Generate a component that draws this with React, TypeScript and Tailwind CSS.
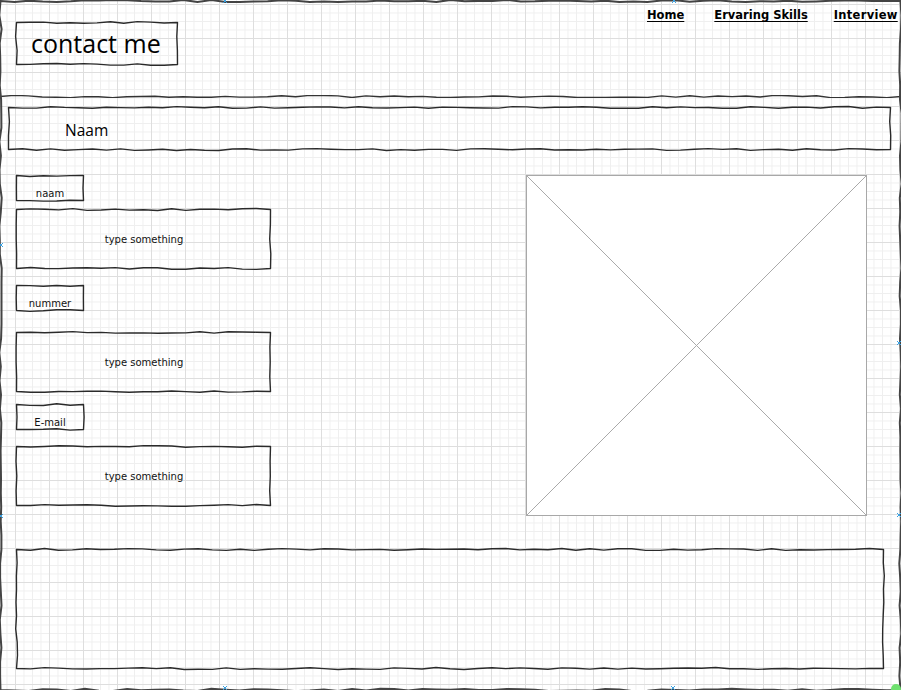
import type { ReactNode } from "react";

// small deterministic noise so the sketch lines look hand drawn but stay stable
const rnd = (i: number, seed: number) => {
  const x = Math.sin(i * 12.9898 + seed * 78.233) * 43758.5453;
  return x - Math.floor(x);
};

const roughPath = (w: number, h: number, seed: number, amp = 2) => {
  const pts: number[][] = [];
  const edge = (x0: number, y0: number, x1: number, y1: number, s: number) => {
    const len = Math.hypot(x1 - x0, y1 - y0);
    const n = Math.max(2, Math.round(len / 14));
    const nx = -(y1 - y0) / len;
    const ny = (x1 - x0) / len;
    for (let i = 0; i < n; i++) {
      const t = i / n;
      const o = i === 0 ? 0 : (rnd(i, s) - 0.5) * amp;
      pts.push([x0 + (x1 - x0) * t + nx * o, y0 + (y1 - y0) * t + ny * o]);
    }
  };
  edge(0.5, 0.5, w - 0.5, 0.5, seed);
  edge(w - 0.5, 0.5, w - 0.5, h - 0.5, seed + 1);
  edge(w - 0.5, h - 0.5, 0.5, h - 0.5, seed + 2);
  edge(0.5, h - 0.5, 0.5, 0.5, seed + 3);
  return "M" + pts.map((p) => p.map((v) => v.toFixed(1)).join(" ")).join(" L") + " Z";
};

const roughLine = (w: number, y: number, seed: number) => {
  const n = Math.round(w / 14);
  const pts: string[] = [];
  for (let i = 0; i <= n; i++) {
    const o = i === 0 || i === n ? 0 : (rnd(i, seed) - 0.5) * 2.2;
    pts.push(`${((w * i) / n).toFixed(1)} ${(y + o).toFixed(1)}`);
  }
  return "M" + pts.join(" L");
};

const SketchBox = ({
  w,
  h,
  seed,
  className,
  children,
}: {
  w: number;
  h: number;
  seed: number;
  className: string;
  children?: ReactNode;
}) => (
  <div className={`relative shrink-0 ${className}`}>
    <svg className="absolute inset-0 overflow-visible pointer-events-none" width={w} height={h}>
      <path d={roughPath(w, h, seed)} fill="none" stroke="#2a2a2a" strokeWidth={1.4} strokeLinejoin="round" />
    </svg>
    {children}
  </div>
);

const Label = ({ text, seed }: { text: string; seed: number }) => (
  <SketchBox w={68} h={26} seed={seed} className="w-[68px] h-[26px] flex items-end justify-center pb-[1px]">
    <span className="font-['DejaVu_Sans',sans-serif] text-[10px] leading-[13px] text-[#111]">{text}</span>
  </SketchBox>
);

const Input = ({ seed }: { seed: number }) => (
  <SketchBox w={255} h={60} seed={seed} className="w-[255px] h-[60px] flex items-center justify-center">
    <span className="font-['DejaVu_Sans',sans-serif] text-[10px] text-[#111] pl-[1px]">type something</span>
  </SketchBox>
);

const Mark = ({ x, y }: { x: number; y: number }) => (
  <path d={`M${x - 2} ${y - 2} L${x + 2} ${y + 2} M${x + 2} ${y - 2} L${x - 2} ${y + 2}`} stroke="#3aa0e0" strokeWidth={1} />
);

export default function App() {
  return (
    <div className="relative w-[901px] h-[690px] overflow-hidden bg-white bg-[linear-gradient(to_right,#dedede_1px,transparent_1px),linear-gradient(to_bottom,#dedede_1px,transparent_1px),linear-gradient(to_right,#efefef_1px,transparent_1px),linear-gradient(to_bottom,#efefef_1px,transparent_1px)] bg-[size:34px_34px,34px_34px,8.5px_8.5px,8.5px_8.5px] bg-[position:15px_4px,15px_4px,15px_4px,15px_4px]">
      {/* header */}
      <div className="flex h-[95px]">
        <SketchBox w={162} h={43} seed={3} className="w-[162px] h-[43px] ml-[16px] mt-[22px] flex items-center pl-[15px]">
          <span className="font-['Open_Sans',sans-serif] text-[25px] leading-none text-black">contact me</span>
        </SketchBox>
        <nav className="flex shrink-0 whitespace-nowrap ml-[469px] mt-[7px] h-[18px] font-['DejaVu_Sans',sans-serif] font-bold text-[11.5px] text-black">
          <a className="underline underline-offset-2">Home</a>
          <a className="underline underline-offset-2 ml-[30px]">Ervaring Skills</a>
          <a className="underline underline-offset-2 ml-[26px] tracking-[0.3px]">Interview</a>
        </nav>
      </div>

      <svg className="block" width={901} height={3}>
        <path d={roughLine(901, 1.5, 11)} fill="none" stroke="#333" strokeWidth={1.4} />
      </svg>

      {/* naam bar */}
      <SketchBox w={883} h={43} seed={21} className="w-[883px] h-[43px] ml-[8px] mt-[9px] flex items-center pl-[57px] pt-[5px]">
        <span className="font-['Open_Sans',sans-serif] text-[15.5px] text-black">Naam</span>
      </SketchBox>

      {/* form + picture */}
      <div className="flex mt-[25px] pl-[16px]">
        <div className="flex flex-col w-[255px]">
          <Label text="naam" seed={31} />
          <div className="mt-[8px]">
            <Input seed={41} />
          </div>
          <div className="mt-[16px]">
            <Label text="nummer" seed={51} />
          </div>
          <div className="mt-[21px]">
            <Input seed={61} />
          </div>
          <div className="mt-[12px]">
            <Label text="E-mail" seed={71} />
          </div>
          <div className="mt-[16px]">
            <Input seed={81} />
          </div>
        </div>
        <div className="ml-[255px] w-[341px] h-[341px] bg-white border border-[#a8a8a8]">
          <svg className="block" width={339} height={339}>
            <path d="M0 0 L339 339 M339 0 L0 339" stroke="#aaaaaa" strokeWidth={1} />
          </svg>
        </div>
      </div>

      {/* bottom area */}
      <SketchBox w={868} h={120} seed={91} className="w-[868px] h-[120px] ml-[16px] mt-[33px]" />

      {/* page frame */}
      <svg className="absolute inset-0 pointer-events-none" width={901} height={690}>
        <path d={roughPath(901, 690, 101, 2.4)} transform="translate(0 0.5)" fill="none" stroke="#444" strokeWidth={2} />
        <Mark x={225} y={1} />
        <Mark x={674} y={1} />
        <Mark x={1} y={245} />
        <Mark x={1} y={516} />
        <Mark x={899} y={343} />
        <Mark x={899} y={515} />
        <Mark x={225} y={688} />
        <Mark x={673} y={688} />
        <circle cx={896} cy={689} r={5} fill="#6ee06e" />
      </svg>
    </div>
  );
}
